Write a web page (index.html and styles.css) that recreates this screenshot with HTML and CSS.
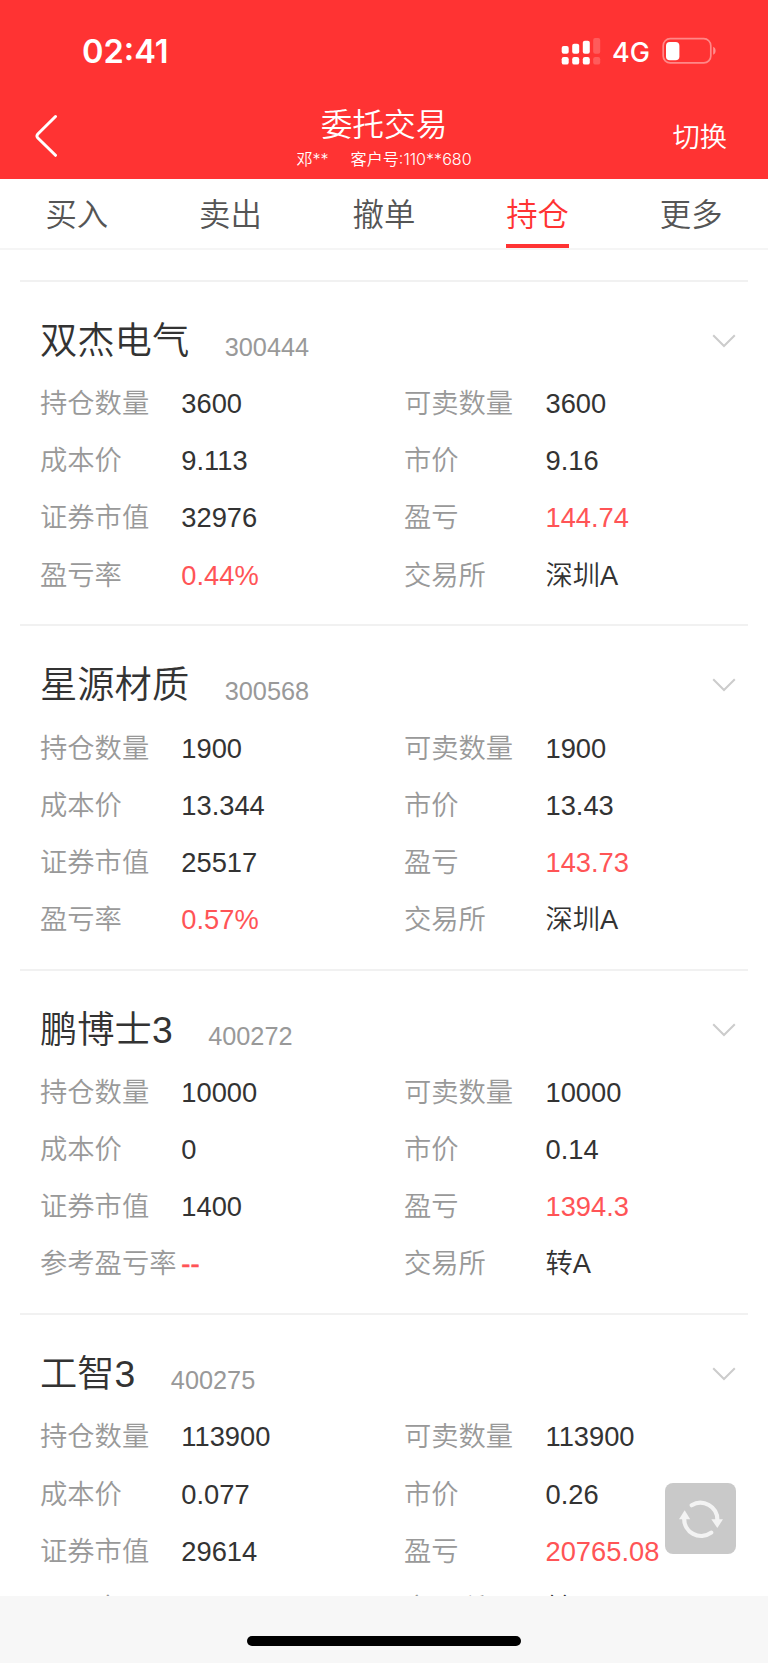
FILE: index.html
```html
<!DOCTYPE html>
<html lang="zh-CN">
<head>
<meta charset="utf-8">
<title>委托交易</title>
<link rel="stylesheet" href="styles.css">
</head>
<body>
<div class="app">
  <header class="header">
    <div class="status">
      <span class="time">02:41</span>
      <svg class="signal" width="40" height="28" viewBox="0 0 40 28" fill="#fff">
        <rect x="0.7" y="9" width="7" height="7.7" rx="2"/>
        <rect x="11.2" y="6.8" width="7" height="9.9" rx="2"/>
        <rect x="21.8" y="3.8" width="7" height="12.9" rx="2"/>
        <rect x="32.2" y="1" width="7" height="15.7" rx="2" opacity=".2"/>
        <rect x="0.7" y="20" width="7" height="7.6" rx="2.2"/>
        <rect x="11.2" y="20" width="7" height="7.6" rx="2.2"/>
        <rect x="21.8" y="20" width="7" height="7.6" rx="2.2"/>
        <rect x="32.2" y="20" width="7" height="7.6" rx="2.2" opacity=".2"/>
      </svg>
      <span class="network">4G</span>
      <svg class="battery" width="56" height="28" viewBox="0 0 56 28">
        <rect x="1.2" y="1.7" width="47.6" height="24.2" rx="7" fill="none" stroke="#fff" stroke-opacity=".42" stroke-width="1.7"/>
        <rect x="4" y="5" width="13.4" height="18.2" rx="3.8" fill="#fff"/>
        <path d="M51.2 9.8c3.2 1.2 3.2 6.800 0 8z" fill="#fff" fill-opacity=".45"/>
      </svg>
    </div>
    <div class="navbar">
      <svg class="back" width="24" height="44" viewBox="0 0 24 44" fill="none" stroke="#fff" stroke-width="3" stroke-linecap="round" stroke-linejoin="round"><path d="M20.500 2.500 2.600 20.300Q1.300 22 2.600 23.700L20.500 41.300"/></svg>
      <div class="heading">
        <h1 class="title">委托交易</h1>
        <p class="account"><span>邓**</span><span>客户号:110**680</span></p>
      </div>
      <span class="switch">切换</span>
    </div>
  </header>
  <nav class="tabs">
    <span class="tab"><span class="tab-label">买入</span></span>
    <span class="tab"><span class="tab-label">卖出</span></span>
    <span class="tab"><span class="tab-label">撤单</span></span>
    <span class="tab active"><span class="tab-label">持仓</span></span>
    <span class="tab"><span class="tab-label">更多</span></span>
  </nav>
  <main class="list">
    <section class="card">
      <div class="card-head"><h2 class="name">双杰电气</h2><span class="code">300444</span><svg class="chevron" width="24" height="14" viewBox="0 0 24 14"><path d="M1.200 1.200 12 12 22.800 1.200"/></svg></div>
      <dl class="grid">
        <dt>持仓数量</dt><dd>3600</dd><dt>可卖数量</dt><dd>3600</dd>
        <dt>成本价</dt><dd>9.113</dd><dt>市价</dt><dd>9.16</dd>
        <dt>证券市值</dt><dd>32976</dd><dt>盈亏</dt><dd class="up">144.74</dd>
        <dt>盈亏率</dt><dd class="up">0.44%</dd><dt>交易所</dt><dd>深圳A</dd>
      </dl>
    </section>
    <section class="card">
      <div class="card-head"><h2 class="name">星源材质</h2><span class="code">300568</span><svg class="chevron" width="24" height="14" viewBox="0 0 24 14"><path d="M1.200 1.200 12 12 22.800 1.200"/></svg></div>
      <dl class="grid">
        <dt>持仓数量</dt><dd>1900</dd><dt>可卖数量</dt><dd>1900</dd>
        <dt>成本价</dt><dd>13.344</dd><dt>市价</dt><dd>13.43</dd>
        <dt>证券市值</dt><dd>25517</dd><dt>盈亏</dt><dd class="up">143.73</dd>
        <dt>盈亏率</dt><dd class="up">0.57%</dd><dt>交易所</dt><dd>深圳A</dd>
      </dl>
    </section>
    <section class="card">
      <div class="card-head"><h2 class="name">鹏博士3</h2><span class="code">400272</span><svg class="chevron" width="24" height="14" viewBox="0 0 24 14"><path d="M1.200 1.200 12 12 22.800 1.200"/></svg></div>
      <dl class="grid">
        <dt>持仓数量</dt><dd>10000</dd><dt>可卖数量</dt><dd>10000</dd>
        <dt>成本价</dt><dd>0</dd><dt>市价</dt><dd>0.14</dd>
        <dt>证券市值</dt><dd>1400</dd><dt>盈亏</dt><dd class="up">1394.3</dd>
        <dt>参考盈亏率</dt><dd class="up dash">--</dd><dt>交易所</dt><dd>转A</dd>
      </dl>
    </section>
    <section class="card">
      <div class="card-head"><h2 class="name">工智3</h2><span class="code">400275</span><svg class="chevron" width="24" height="14" viewBox="0 0 24 14"><path d="M1.200 1.200 12 12 22.800 1.200"/></svg></div>
      <dl class="grid">
        <dt>持仓数量</dt><dd>113900</dd><dt>可卖数量</dt><dd>113900</dd>
        <dt>成本价</dt><dd>0.077</dd><dt>市价</dt><dd>0.26</dd>
        <dt>证券市值</dt><dd>29614</dd><dt>盈亏</dt><dd class="up">20765.08</dd>
        <dt>盈亏率</dt><dd></dd><dt>交易所</dt><dd>转A</dd>
      </dl>
    </section>
  </main>
  <footer class="home"><span class="indicator"></span></footer>
  <button class="refresh" aria-label="刷新">
    <svg width="71" height="71" viewBox="0 0 71 71" fill="none" stroke="#f3f3f3" stroke-width="4.200" stroke-linecap="round">
      <path d="M26.600 22.200A17 17 0 0 1 52.400 37"/>
      <path d="M19.200 35A17 17 0 0 0 46.200 49.600"/>
      <path d="M46.300 36.300H58L52.300 45z" fill="#f3f3f3" stroke="none"/>
      <path d="M14 36.300H25.200L19.700 27.300z" fill="#f3f3f3" stroke="none"/>
    </svg>
  </button>
</div>
</body>
</html>
```

FILE: styles.css
```css
* { box-sizing: border-box; margin: 0; padding: 0; }
body {
  background: #fff;
  font-family: "Liberation Sans", "Noto Sans CJK SC", sans-serif;
  font-weight: 350;
}
.app {
  position: relative;
  display: flex;
  flex-direction: column;
  width: 768px;
  height: 1663px;
  overflow: hidden;
}

.header {
  flex: none;
  height: 179px;
  background: #f33;
  color: #fff;
  font-family: Inter, "Noto Sans CJK SC", sans-serif;
}
.status {
  display: flex;
  align-items: center;
  height: 102px;
  padding: 0 50px 0 82px;
}
.time { font-size: 32.600px; font-weight: 600; line-height: 40px; margin-right: auto; }
.network { width: 37px; margin: 3px 13px 0 11px; font-size: 27px; font-weight: 500; line-height: 34px; }
.navbar {
  display: grid;
  grid-template-columns: 200px 1fr 200px;
  height: 77px;
}
.back { margin: 12px 0 0 35px; }
.heading { text-align: center; }
.title { font-size: 31.700px; font-weight: 350; line-height: 46px; }
.account {
  display: flex;
  justify-content: center;
  gap: 22px;
  font-size: 16.100px;
  font-weight: 350;
  line-height: 22px;
}
.switch { justify-self: end; margin: 16px 41px 0 0; font-size: 27.300px; font-weight: 350; line-height: 40px; }

.tabs {
  flex: none;
  display: flex;
  height: 71px;
  border-bottom: 2px solid #f5f5f5;
}
.tab { flex: 1; display: flex; justify-content: center; }
.tab-label {
  height: 69px;
  font-size: 31.400px;
  line-height: 74px;
  color: #555;
}
.active .tab-label { color: #f33; border-bottom: 4px solid #f33; }

.list {
  flex: none;
  height: 1346px;
  padding: 30px 20px 0;
  overflow: hidden;
}
.card {
  height: 344.400px;
  border-top: 2px solid #f1f1f1;
  padding: 33px 0 0 20px;
}
.card-head { display: flex; height: 60.300px; color: #333; }
.name { font-size: 37.300px; font-weight: 350; line-height: 52px; }
.code { margin-left: 35.500px; font-size: 25.300px; line-height: 64px; color: #999; }
.chevron { margin: 19px 12px 0 auto; fill: none; stroke: #ccc; stroke-width: 2; }
.grid {
  display: grid;
  grid-template-columns: 141.300px 222.700px 141.500px 1fr;
  grid-auto-rows: 57.100px;
  font-size: 27.300px;
  line-height: 57px;
  white-space: nowrap;
}
.grid dt { color: #999; }
.grid dd { color: #333; }
.grid .up { color: #ff5456; }
.grid .dash { -webkit-text-stroke: 0.600px #ff5456; }

.home {
  flex: 1;
  display: flex;
  justify-content: center;
  padding-top: 40px;
  background: #f7f7f7;
}
.indicator { width: 274px; height: 10px; border-radius: 5px; background: #000; }

.refresh {
  position: absolute;
  right: 32px;
  bottom: 109px;
  width: 71px;
  height: 71px;
  border: 0;
  border-radius: 8px;
  background: #c9c9c9;
}
```
